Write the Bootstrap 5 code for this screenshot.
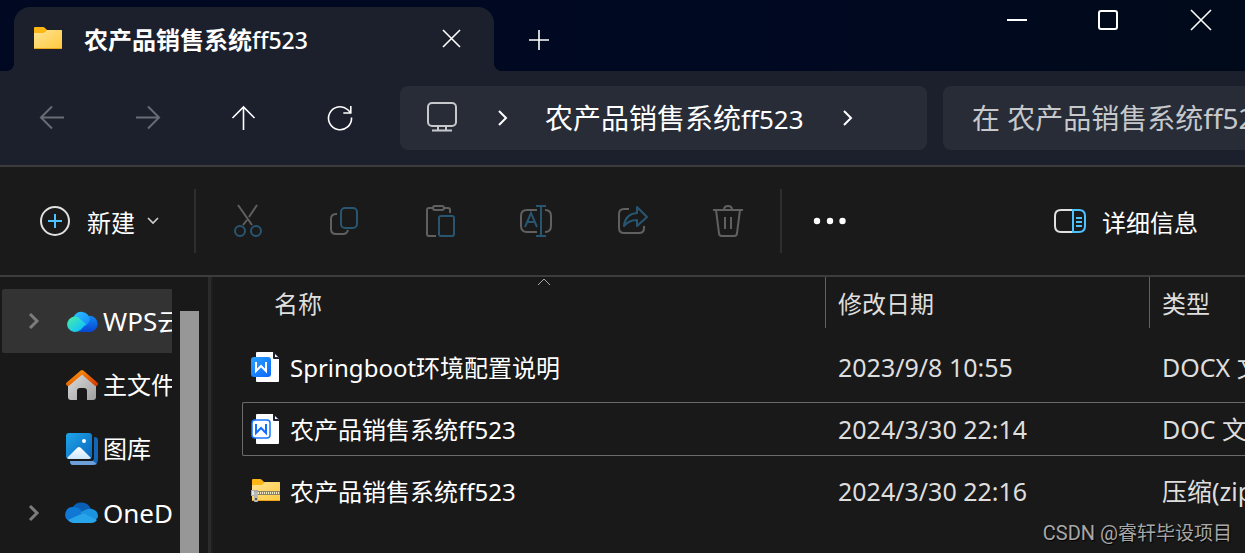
<!DOCTYPE html>
<html lang="zh-CN" data-bs-theme="dark">
<head>
<meta charset="utf-8">
<meta name="viewport" content="width=device-width, initial-scale=1">
<title>农产品销售系统ff523</title>
<link href="https://cdn.jsdelivr.net/npm/bootstrap@5.3.0/dist/css/bootstrap.min.css" rel="stylesheet">
<style>
  body { background: #191919; color: #fff; font-family: "Noto Sans", "Noto Sans CJK SC", sans-serif; font-size: 24px; line-height: 32px; }
  button { background: none; border: 0; padding: 0; color: inherit; display: flex; align-items: center; justify-content: center; }
  svg { display: block; flex: none; fill: none; stroke: currentColor; stroke-width: 2; }
  .art { stroke: none; }
  .thin { stroke-width: 1.600; }
  .accent { stroke: #4cc2ff; }
  .latin-26 { font-size: 26px; }

  .title-bar { background: linear-gradient(90deg, #000921, #000922 60%, #000a1a); height: 71px; padding-left: 14px; }
  .tab-page { position: relative; width: 480px; height: 64px; padding: 0 31px 0 18px; background: #1b202c; border-radius: 16px 16px 0 0; }
  .tab-page::before, .tab-page::after { content: ""; position: absolute; bottom: 0; width: 8px; height: 8px; }
  .tab-page::before { right: 100%; background: radial-gradient(circle at 0 0, transparent 8px, #1b202c 8px); }
  .tab-page::after { left: 100%; background: radial-gradient(circle at 100% 0, transparent 8px, #1b202c 8px); }
  .tab-title { font-weight: 700; margin-left: 20px; padding-top: 2px; }
  .tab-title span { font-size: 23px; font-weight: 500; }
  .tab-add { width: 90px; height: 62px; align-self: flex-end; }
  .win-btn { width: 91px; height: 40px; }

  .nav-row { background: #1b202c; padding: 15px 0 15px 4px; border-bottom: 2px solid #3c3c3c; }
  .nav-btn { width: 96px; height: 64px; }
  .nav-btn:disabled { color: #686c75; }
  .address { background: #272c37; border-radius: 8px; height: 64px; margin: 0 16px 0 12px; padding-left: 26px; font-size: 28px; }
  .address a { color: #fff; margin: 0 38px 0 36px; }
  .place { color: #c6c8cc; margin-right: 39px; }
  .search-box { width: 302px; height: 64px; border: 0; border-radius: 8px 0 0 8px; background: #272c37; padding: 0 0 0 29px; font-size: 28px; color: #fff; }
  .search-box::placeholder { color: #c6c8cb; opacity: 1; }

  .tool-row { background: #1a1a1a; height: 110px; padding: 0 47px 0 39px; border-bottom: 2px solid #3c3c3c; }
  .tool-btn { width: 96px; height: 64px; color: #606060; }
  .tool-rule { width: 2px; height: 64px; background: #2e2e2e; }
  .tool-text { padding-top: 4px; margin-left: 15px; }
  .create { width: 155px; justify-content: flex-start; }
  .create .tool-text { margin: 0 12px 0 16px; }
  .create .thin { color: #d0d0d0; }
  .hue { stroke: #285670; }

  .side { width: 208px; }
  .side-list { width: 172px; padding: 12px 0 0 2px; }
  .side-item { height: 64px; color: #fff; padding-left: 26px; }
  .side-item.picked { background: #333; border-radius: 2px 0 0 2px; }
  .side-track { width: 19px; margin: 34px 0 0 8px; background: #979797; }
  .side-edge { width: 5px; background: #1e1e1e; border-left: 3px solid #2b2b2b; }
  .twist { width: 12px; color: #7c7c7c; stroke-width: 3; margin-right: 25px; }
  .side-label { padding-left: 4px; }

  .files { padding-left: 29px; }
  .file-table { table-layout: fixed; width: 100%; border-collapse: separate; border-spacing: 0 8px; margin-top: -8px; }
  .file-table th { position: relative; height: 55px; padding: 0 0 2px 13px; font-weight: 400; color: #dedede; background: linear-gradient(#626262, #626262) no-repeat 0 0 / 1px 51px; }
  .file-table th:first-child { background: none; padding-left: 32px; }
  .file-table td { height: 54px; padding: 0 0 0 13px; border: 1px solid transparent; border-width: 1px 0; font-size: 25px; color: #dedede; overflow: hidden; white-space: nowrap; }
  .file-table td:first-child { padding-left: 7px; border-left-width: 1px; font-size: 24px; color: #fff; }
  .file-table .focused td { border-color: #6b6b6b; }
  .file-table .focused td:first-child { border-radius: 2px 0 0 2px; }
  .file-name { padding-top: 2px; }
  .col-name { width: 583px; }
  .col-date { width: 324px; }
  .sort-mark { position: absolute; top: 0; left: 20px; right: 0; margin: 0 auto; color: #aaa; stroke-width: 1; }
  .credit { position: absolute; right: 13px; bottom: 8px; font-size: 19px; line-height: 24px; color: #a8a8a8; text-shadow: 1px 1px 1px #000; }
  .credit span { font-family: Roboto, sans-serif; font-size: 20px; }
</style>
</head>
<body class="vh-100 overflow-hidden d-flex flex-column position-relative">

<svg width="0" height="0" class="position-absolute" aria-hidden="true">
  <defs>
    <linearGradient id="gFolder" x1="0" y1="0" x2="1" y2="1"><stop offset="0" stop-color="#ffe394"/><stop offset="1" stop-color="#ffc93c"/></linearGradient>
    <linearGradient id="gMint" x1="0" y1="0" x2="1" y2="1"><stop offset="0" stop-color="#4bf0a4"/><stop offset=".8" stop-color="#12c4f8"/><stop offset="1" stop-color="#12b4ff"/></linearGradient>
    <linearGradient id="gSky" x1="0" y1="0" x2="1" y2="1"><stop offset="0" stop-color="#2cc6ff"/><stop offset="1" stop-color="#1485fb"/></linearGradient>
    <linearGradient id="gDeep" x1="0" y1="0" x2="0" y2="1"><stop offset="0" stop-color="#1187f5"/><stop offset="1" stop-color="#0747d0"/></linearGradient>
    <linearGradient id="gRoof" x1="0" y1="0" x2="1" y2="1"><stop offset="0" stop-color="#ff9a0a"/><stop offset="1" stop-color="#d83c00"/></linearGradient>
    <linearGradient id="gWall" x1="0" y1="0" x2="1" y2="1"><stop offset="0" stop-color="#dcdcdc"/><stop offset="1" stop-color="#a0a0a0"/></linearGradient>
    <linearGradient id="gPhoto" x1="0" y1="0" x2="1" y2="1"><stop offset="0" stop-color="#1fa5e8"/><stop offset="1" stop-color="#0a65bd"/></linearGradient>
    <linearGradient id="gSnow" x1="0" y1="0" x2="0" y2="1"><stop offset="0" stop-color="#fff"/><stop offset="1" stop-color="#cbe6fa"/></linearGradient>
    <linearGradient id="gDocx" x1="0" y1="0" x2="1" y2="1"><stop offset="0" stop-color="#2aa2ff"/><stop offset="1" stop-color="#0d66ff"/></linearGradient>
  </defs>
</svg>

<header class="title-bar d-flex flex-shrink-0">
  <div class="tab-page d-flex align-items-center align-self-end">
    <svg class="art" width="32" height="26" viewBox="0 0 32 26"><path d="M2 2q0-1 1-1h8q1 0 2 1l2 2h14q1 0 1 1v17H2z" fill="#fdb614"/><path d="M2 7h9q1 0 2-1l2-2h14q1 0 1 1v17q0 1-1 1H3q-1 0-1-1z" fill="url(#gFolder)"/><path d="M2 22h28q0 1-1 1H3q-1 0-1-1z" fill="#eaa51b"/></svg>
    <span class="tab-title flex-grow-1">农产品销售系统<span>ff523</span></span>
    <button type="button" aria-label="关闭标签页"><svg class="thin" width="24" height="24"><path d="M4 3l17 17M21 3L4 20"/></svg></button>
  </div>
  <button type="button" class="tab-add" aria-label="新标签页"><svg class="thin" width="22" height="22"><path d="M1 11h20M11 1v20"/></svg></button>
  <div class="d-flex ms-auto">
    <button type="button" class="win-btn" aria-label="最小化"><svg width="22" height="22"><path d="M0 11h20"/></svg></button>
    <button type="button" class="win-btn" aria-label="最大化"><svg width="22" height="22"><rect x="1" y="2" width="18" height="18" rx="2"/></svg></button>
    <button type="button" class="win-btn" aria-label="关闭"><svg class="thin" width="24" height="22"><path d="M3 1l20 20M23 1L3 21"/></svg></button>
  </div>
</header>

<nav class="nav-row d-flex flex-shrink-0" aria-label="地址">
  <button type="button" class="nav-btn" disabled aria-label="后退"><svg width="26" height="26"><path d="M25 12.500H2M13 1.500L2 12.500l11 11"/></svg></button>
  <button type="button" class="nav-btn" disabled aria-label="前进"><svg width="26" height="26"><path d="M1 12.500h23M13 1.500l11 11-11 11"/></svg></button>
  <button type="button" class="nav-btn" aria-label="向上"><svg class="thin" width="26" height="26"><path d="M12.500 25V2M1.500 13l11-11 11 11"/></svg></button>
  <button type="button" class="nav-btn" aria-label="刷新"><svg class="thin" width="26" height="26"><path d="M24.500 12.500A11.500 11.500 0 1 1 20.500 4.500L23.500 7.500M23.800 1v7h-7.500"/></svg></button>
  <div class="address d-flex align-items-center flex-grow-1">
    <svg class="place" width="32" height="32"><rect x="2" y="1" width="28" height="23" rx="4"/><path d="M12 24v4M20 24v4M6 28.500h20"/></svg>
    <svg width="12" height="18"><path d="M2 2l7 7-7 7"/></svg>
    <a href="#" class="text-decoration-none text-nowrap">农产品销售系统<span class="latin-26">ff523</span></a>
    <svg width="12" height="18"><path d="M2 2l7 7-7 7"/></svg>
  </div>
  <input type="text" class="search-box" aria-label="搜索" placeholder="在 农产品销售系统ff523 中搜索">
</nav>

<div class="tool-row d-flex align-items-center flex-shrink-0" role="toolbar" aria-label="命令栏">
  <button type="button" class="create">
    <svg width="32" height="32"><circle cx="16" cy="16" r="14" stroke="#e0e0e0"/><path class="accent" d="M16 9v14M9 16h14"/></svg>
    <span class="tool-text">新建</span>
    <svg width="12" height="10" class="thin"><path d="M1 2l5 5 5-5"/></svg>
  </button>
  <span class="tool-rule me-1"></span>
  <button type="button" class="tool-btn" disabled aria-label="剪切"><svg width="32" height="34"><path d="M6 1l14 20M25 1L17 13M15 16l-4 5"/><g class="hue"><circle cx="8" cy="27" r="5"/><circle cx="24" cy="27" r="5"/></g></svg></button>
  <button type="button" class="tool-btn" disabled aria-label="复制"><svg width="32" height="32"><path d="M9 9H8q-5 0-5 5v10q0 5 5 5h7q4 0 5-4"/><rect class="hue" x="13" y="3" width="16" height="20" rx="4"/></svg></button>
  <button type="button" class="tool-btn" disabled aria-label="粘贴"><svg width="32" height="34"><path d="M9 4H5q-2 0-2 2v24q0 2 2 2h7M20 4h4q2 0 2 2v3"/><rect x="9" y="2" width="11" height="4" rx="2"/><rect class="hue" x="15" y="12" width="15" height="20" rx="2"/></svg></button>
  <button type="button" class="tool-btn" disabled aria-label="重命名"><svg width="34" height="34"><path d="M18 6H8q-6 0-6 6v10q0 6 6 6h10M26 6q6 0 6 6v10q0 6-6 6"/><path class="hue" d="M6 23l6-14 6 14M8 18h8M17 2h10M17 32h10M22 2v30"/></svg></button>
  <button type="button" class="tool-btn" disabled aria-label="共享"><svg width="32" height="32"><path d="M13 4H8q-5 0-5 5v14q0 5 5 5h15q5 0 5-5v-2"/><path class="hue" stroke-linejoin="round" d="M21 2l10 10-10 9v-6q-8 0-13 6 1-12 13-13z"/></svg></button>
  <button type="button" class="tool-btn" disabled aria-label="删除"><svg width="32" height="34"><path d="M1 6h30M12 6q0-4 4-4t4 4M4 6l3 23q0 3 3 3h12q3 0 3-3l3-23M13 13v12M19 13v12"/></svg></button>
  <span class="tool-rule ms-1"></span>
  <button type="button" class="tool-btn text-white" aria-label="查看更多"><svg class="art" width="34" height="8"><g fill="#fff"><circle cx="4" cy="4" r="3.200"/><circle cx="17" cy="4" r="3.200"/><circle cx="29.500" cy="4" r="3.200"/></g></svg></button>
  <button type="button" class="ms-auto">
    <svg width="34" height="26"><path d="M19 2H8Q2 2 2 8v10q0 6 6 6h11" stroke="#e0e0e0"/><path class="accent" d="M20 2h6q6 0 6 6v10q0 6-6 6h-6zM23 10h6M23 14h6M23 18h6"/></svg>
    <span class="tool-text text-nowrap">详细信息</span>
  </button>
</div>

<div class="d-flex flex-grow-1 overflow-hidden">
  <aside class="side d-flex flex-shrink-0">
    <nav class="side-list overflow-hidden flex-shrink-0" aria-label="导航窗格">
      <a href="#" class="side-item picked d-flex align-items-center text-decoration-none text-nowrap">
        <svg class="twist" height="18"><path d="M2 2l7 7-7 7"/></svg>
        <svg class="art" width="34" height="24" viewBox="0 0 34 24"><path d="M14 23h11a8 8 0 1 0-1-16.200z" fill="url(#gDeep)"/><path d="M8 9a8.700 8.700 0 0 1 17 2q-1 3-4.500 6L14 15z" fill="url(#gSky)"/><path d="M13.500 8.500L21 15l-5.500 6q-2 2-6 2A7.700 7.700 0 1 1 13.500 8.500z" fill="url(#gMint)"/></svg>
        <span class="side-label"><span class="latin-26">WPS</span>云盘</span>
      </a>
      <a href="#" class="side-item d-flex align-items-center text-decoration-none text-nowrap">
        <span class="twist flex-shrink-0"></span>
        <svg class="art" width="34" height="32" viewBox="0 0 34 32"><path d="M17 4L3 16v12q0 3 3 3h6v-9q0-3 3-3h4q3 0 3 3v9h6q3 0 3-3V16z" fill="url(#gWall)"/><path d="M3 15L17 3l14 12" stroke="url(#gRoof)" stroke-width="4" stroke-linecap="round" stroke-linejoin="round"/></svg>
        <span class="side-label">主文件夹</span>
      </a>
      <a href="#" class="side-item d-flex align-items-center text-decoration-none text-nowrap">
        <span class="twist flex-shrink-0"></span>
        <svg class="art" width="34" height="34" viewBox="0 0 34 34"><path d="M29 5q4 0 4 3v19q0 6-6 6H8q-3 0-3-4h21q3 0 3-3z" fill="#1565b5"/><path d="M5 29h23l4 3q-2 1-5 1H8q-3 0-3-4z" fill="#6d9fd8"/><rect x="1" y="1" width="26" height="26" rx="3" fill="url(#gPhoto)"/><path d="M2 26l10-10q2-2 4 0l10 10q-1 1-2 1H4q-1 0-2-1z" fill="url(#gSnow)"/><circle cx="19" cy="9" r="2" fill="#fff"/></svg>
        <span class="side-label">图库</span>
      </a>
      <a href="#" class="side-item d-flex align-items-center text-decoration-none text-nowrap">
        <svg class="twist" height="18"><path d="M2 2l7 7-7 7"/></svg>
        <svg class="art" width="34" height="22" viewBox="0 0 34 22"><path d="M7 6A10.500 10.500 0 0 1 26 7l-8 5z" fill="#0a5fb4"/><path d="M8 5q7 0 9 5l-2 3-11 6A7.500 7.500 0 0 1 8 5z" fill="#0f78d4"/><path d="M15 11q7-5 12-4 6 1 6 8l-3 4z" fill="#1a93e0"/><path d="M3 18l13-6q2-1 4 0l12 6q-2 3-5 3H8q-3 0-5-3z" fill="#28a5ea"/></svg>
        <span class="side-label latin-26">OneDrive</span>
      </a>
    </nav>
    <div class="side-track"></div>
  </aside>
  <div class="side-edge flex-shrink-0"></div>

  <main class="files flex-grow-1 overflow-hidden">
    <table class="file-table">
      <colgroup><col class="col-name"><col class="col-date"><col></colgroup>
      <thead>
        <tr>
          <th scope="col">名称<svg class="sort-mark" width="14" height="9"><path d="M1 8l6-6 6 6"/></svg></th>
          <th scope="col">修改日期</th>
          <th scope="col">类型</th>
        </tr>
      </thead>
      <tbody>
        <tr>
          <td><div class="d-flex align-items-center gap-2">
            <svg class="art" width="32" height="32" viewBox="0 0 32 32"><path d="M6 2q0-1 1-1h16l6 6v23q0 1-1 1H7q-1 0-1-1z" fill="#fff"/><path d="M23 1h1l5 6v1h-5q-1 0-1-1z" fill="#1a2233"/><path d="M25 3v3h3z" fill="#fff"/><rect x="1" y="6" width="20" height="20" rx="3" fill="url(#gDocx)"/><path d="M6 11v9l5-5 5 5v-9" stroke="#fff" stroke-width="2"/></svg>
            <span class="file-name">Springboot环境配置说明</span></div></td>
          <td>2023/9/8 10:55</td>
          <td>DOCX 文档</td>
        </tr>
        <tr class="focused">
          <td><div class="d-flex align-items-center gap-2">
            <svg class="art" width="32" height="32" viewBox="0 0 32 32"><path d="M6 2q0-1 1-1h16l6 6v23q0 1-1 1H7q-1 0-1-1z" fill="#fff"/><path d="M23 1h1l5 6v1h-5q-1 0-1-1z" fill="#1a2233"/><path d="M25 3v3h3z" fill="#fff"/><rect x="2" y="7" width="18" height="18" rx="3" fill="#fff" stroke="#1677ff" stroke-width="1.500"/><path d="M6 11v9l5-5 5 5v-9" stroke="#126fff" stroke-width="2"/></svg>
            <span class="file-name">农产品销售系统ff523</span></div></td>
          <td>2024/3/30 22:14</td>
          <td>DOC 文档</td>
        </tr>
        <tr>
          <td><div class="d-flex align-items-center gap-2">
            <svg class="art" width="32" height="26" viewBox="0 0 32 26"><path d="M2 2q0-1 1-1h7q1 0 2 1l2 2h15q1 0 1 1v17H2z" fill="#fdb614"/><path d="M2 7h9q1 0 2-1l2-2h14q1 0 1 1v17q0 1-1 1H3q-1 0-1-1z" fill="url(#gFolder)"/><path d="M2 22h28q0 1-1 1H3q-1 0-1-1z" fill="#eaa51b"/><path d="M7 13h23v4H7z" fill="#8d8468"/><path d="M8 15h22" stroke="#f3e9c4" stroke-width="2" stroke-dasharray="1 1"/><path d="M1 12h7v6H1z" fill="#a9a9a9"/><path d="M2 13h2v4H2z" fill="#e6e6e6"/><rect x="4" y="14" width="4" height="10" rx="1" fill="#b9b9b9"/><path d="M5 20h2v2H5z" fill="#555"/></svg>
            <span class="file-name">农产品销售系统ff523</span></div></td>
          <td>2024/3/30 22:16</td>
          <td>压缩(zipped)文件夹</td>
        </tr>
      </tbody>
    </table>
  </main>
</div>

<div class="credit"><span>CSDN @</span>睿轩毕设项目</div>
<script src="https://cdn.jsdelivr.net/npm/bootstrap@5.3.0/dist/js/bootstrap.bundle.min.js"></script>
</body>
</html>
